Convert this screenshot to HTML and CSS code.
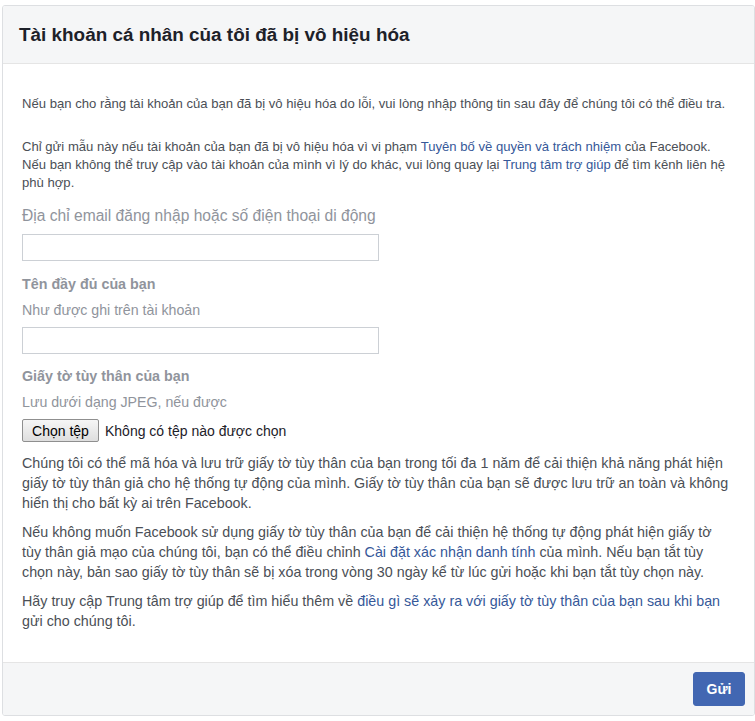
FILE: index.html
```html
<!DOCTYPE html>
<html lang="vi">
<head>
<meta charset="utf-8">
<title>Tài khoản cá nhân của tôi đã bị vô hiệu hóa</title>
<link rel="stylesheet" href="styles.css">
</head>
<body>
<div class="card">
  <div class="card-header">
    <h1 class="title">Tài khoản cá nhân của tôi đã bị vô hiệu hóa</h1>
  </div>
  <div class="card-body">
    <p class="small p1">Nếu bạn cho rằng tài khoản của bạn đã bị vô hiệu hóa do lỗi, vui lòng nhập thông tin sau đây để chúng tôi có thể điều tra.</p>
    <p class="small p2">Chỉ gửi mẫu này nếu tài khoản của bạn đã bị vô hiệu hóa vì vi phạm <a class="link" href="#">Tuyên bố về quyền và trách nhiệm</a> của Facebook.<br>Nếu bạn không thể truy cập vào tài khoản của mình vì lý do khác, vui lòng quay lại <a class="link" href="#">Trung tâm trợ giúp</a> để tìm kênh liên hệ phù hợp.</p>

    <label class="label label-email">Địa chỉ email đăng nhập hoặc số điện thoại di động</label>
    <input class="input input-email" type="text">

    <div class="label-strong mt14">Tên đầy đủ của bạn</div>
    <div class="hint">Như được ghi trên tài khoản</div>
    <input class="input input-name" type="text">

    <div class="label-strong mt13">Giấy tờ tùy thân của bạn</div>
    <div class="hint">Lưu dưới dạng JPEG, nếu được</div>
    <div class="file-row">
      <button class="file-btn" type="button">Chọn tệp</button>
      <span class="file-name">Không có tệp nào được chọn</span>
    </div>

    <p class="text t1">Chúng tôi có thể mã hóa và lưu trữ giấy tờ tùy thân của bạn trong tối đa 1 năm để cải thiện khả năng phát hiện giấy tờ tùy thân giả cho hệ thống tự động của mình. Giấy tờ tùy thân của bạn sẽ được lưu trữ an toàn và không hiển thị cho bất kỳ ai trên Facebook.</p>
    <p class="text t2">Nếu không muốn Facebook sử dụng giấy tờ tùy thân của bạn để cải thiện hệ thống tự động phát hiện giấy tờ tùy thân giả mạo của chúng tôi, bạn có thể điều chỉnh <a class="link" href="#">Cài đặt xác nhận danh tính</a> của mình. Nếu bạn tắt tùy chọn này, bản sao giấy tờ tùy thân sẽ bị xóa trong vòng 30 ngày kể từ lúc gửi hoặc khi bạn tắt tùy chọn này.</p>
    <p class="text t2">Hãy truy cập Trung tâm trợ giúp để tìm hiểu thêm về <a class="link" href="#">điều gì sẽ xảy ra với giấy tờ tùy thân của bạn sau khi bạn</a> gửi cho chúng tôi.</p>
  </div>
  <div class="card-footer">
    <button class="submit" type="button">Gửi</button>
  </div>
</div>
</body>
</html>
```

FILE: styles.css
```css
html, body {
  margin: 0;
  padding: 0;
  background: #ffffff;
}

body {
  font-family: "Liberation Sans", Arial, sans-serif;
  color: #4b4f56;
}

.card {
  margin: 5px 0 0 2px;
  width: 753px;
  height: 711px;
  box-sizing: border-box;
  border: 1px solid #dddfe2;
  border-radius: 3px;
  display: flex;
  flex-direction: column;
  background: #ffffff;
  overflow: hidden;
}

.card-header {
  height: 58px;
  box-sizing: border-box;
  background: #f5f6f7;
  border-bottom: 1px solid #e5e5e5;
  display: flex;
  align-items: center;
  padding: 0 0 0 16px;
  flex: none;
}

.title {
  margin: 0;
  font-size: 18.9px;
  font-weight: bold;
  color: #1d2129;
  line-height: 22px;
}

.card-body {
  flex: 1;
  padding: 31px 24px 0 19px;
  display: flex;
  flex-direction: column;
  align-items: flex-start;
}

.small {
  margin: 0;
  font-size: 13.1px;
  line-height: 18px;
  color: #4b4f56;
}

.p2 {
  margin-top: 25px;
}

.link {
  color: #365899;
  text-decoration: none;
}

.label {
  display: block;
  margin-top: 15px;
  font-size: 15.6px;
  line-height: 18px;
  color: #90949c;
}

.input {
  display: block;
  margin: 9px 0 0 0;
  width: 357px;
  height: 27px;
  box-sizing: border-box;
  border: 1px solid #ccd0d5;
  border-radius: 0;
  padding: 3px 4px;
  font-family: inherit;
  font-size: 14px;
  background: #ffffff;
}

.input-name {
  margin-top: 8px;
}

.label-strong {
  font-size: 14.3px;
  line-height: 18px;
  font-weight: bold;
  color: #90949c;
}

.mt14 { margin-top: 14px; }
.mt13 { margin-top: 13px; }

.hint {
  margin-top: 8px;
  font-size: 14.2px;
  line-height: 18px;
  color: #90949c;
}

.file-row {
  margin-top: 8px;
  display: flex;
  align-items: center;
  gap: 6px;
  height: 23px;
}

.file-btn {
  height: 23px;
  box-sizing: border-box;
  padding: 0 8px;
  font-family: "Liberation Sans", Arial, sans-serif;
  font-size: 14px;
  color: #000000;
  background: linear-gradient(#f6f6f6, #dedede);
  border: 1px solid #8f8f8f;
  border-radius: 2px;
  width: 77px;
}

.file-name {
  font-size: 14px;
  color: #1d2129;
}

.text {
  margin: 9px 0 0 0;
  font-size: 14.3px;
  line-height: 20px;
  color: #4b4f56;
}

.t1 {
  margin-top: 11px;
}

.card-footer {
  flex: none;
  height: 53px;
  box-sizing: border-box;
  background: #f5f6f7;
  border-top: 1px solid #e5e5e5;
  display: flex;
  justify-content: flex-end;
  align-items: flex-start;
  padding: 9px 9px 0 0;
}

.submit {
  width: 52px;
  height: 34px;
  border: 1px solid #4267b2;
  border-radius: 3px;
  background: #4267b2;
  color: #ffffff;
  font-family: "Liberation Sans", Arial, sans-serif;
  font-size: 14px;
  font-weight: bold;
  padding: 0;
}
```
